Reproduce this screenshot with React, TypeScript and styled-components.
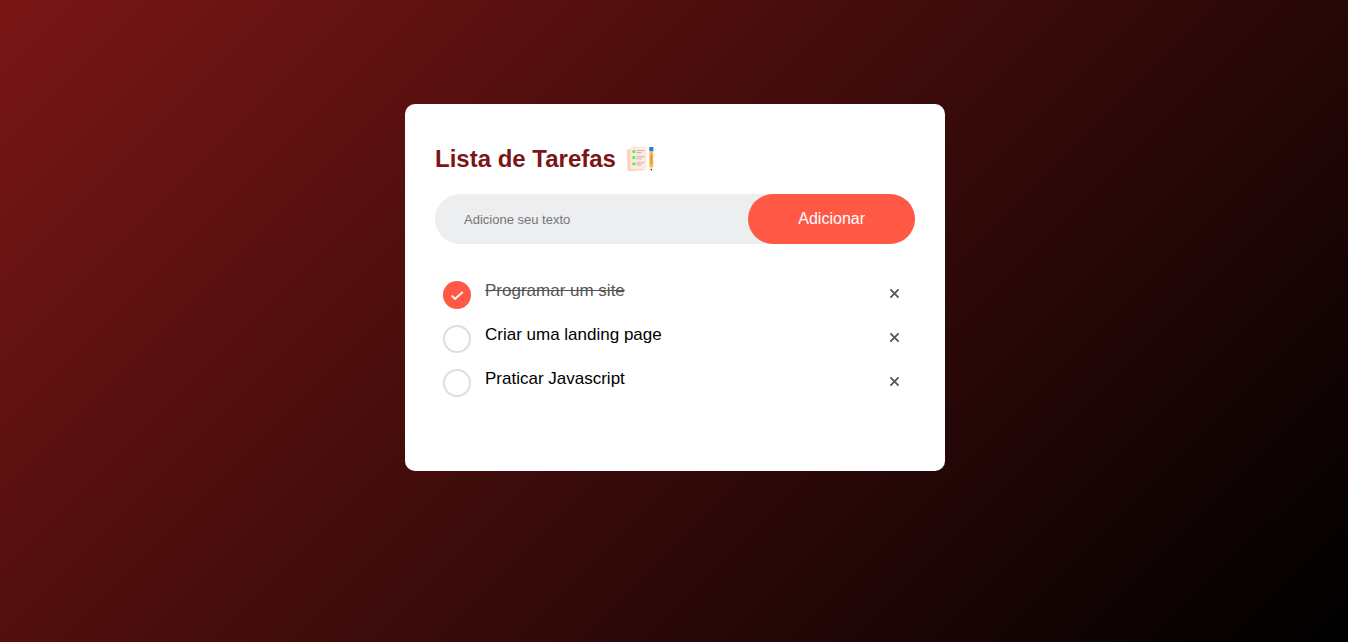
import React, { useState } from "react";
import styled, { createGlobalStyle } from "styled-components";

const GlobalStyle = createGlobalStyle`
  * {
    box-sizing: border-box;
    margin: 0;
    padding: 0;
  }
  body {
    font-family: "Liberation Sans", Arial, sans-serif;
  }
`;

const Page = styled.main`
  min-height: 100vh;
  padding: 104px 10px 10px 12px;
  background: linear-gradient(135deg, #7a1616, #000);
`;

const Card = styled.section`
  width: 100%;
  max-width: 540px;
  margin: 0 auto;
  padding: 40px 30px 74px;
  border-radius: 10px;
  background: #fff;
`;

const Header = styled.header`
  display: flex;
  align-items: center;
  gap: 9px;
  height: 30px;
  margin-bottom: 20px;
`;

const Title = styled.h1`
  color: #7a1616;
  font-size: 24px;
  line-height: 28px;
`;

const Form = styled.form`
  display: flex;
  height: 50px;
  margin-bottom: 37px;
  border-radius: 30px;
  background: #edeef0;
`;

const TextInput = styled.input`
  flex: 1;
  min-width: 0;
  padding: 0 10px 0 29px;
  border: none;
  outline: none;
  background: transparent;
  font-family: inherit;
  font-size: 13px;
  &::placeholder {
    color: #757575;
  }
`;

const AddButton = styled.button`
  padding: 0 50px;
  border: none;
  border-radius: 40px;
  background: #ff5945;
  color: #fff;
  font-family: inherit;
  font-size: 16px;
  cursor: pointer;
`;

const List = styled.ul`
  display: flex;
  flex-direction: column;
  gap: 16px;
  padding: 0 8px;
  list-style: none;
`;

const Row = styled.li`
  display: flex;
  align-items: flex-start;
  justify-content: space-between;
`;

const TaskLabel = styled.label<{ $done: boolean }>`
  display: flex;
  gap: 14px;
  color: ${({ $done }) => ($done ? "#555" : "#000")};
  text-decoration: ${({ $done }) => ($done ? "line-through" : "none")};
  font-size: 17px;
  line-height: 20px;
  cursor: pointer;
`;

const check = `url("data:image/svg+xml,%3Csvg xmlns='http://www.w3.org/2000/svg' viewBox='0 0 28 28'%3E%3Cpath d='M8.7 14.6l3.3 3.2 7.8-6.8' fill='none' stroke='%23fff1ef' stroke-width='2'/%3E%3C/svg%3E")`;

const Tick = styled.input`
  appearance: none;
  flex: none;
  width: 28px;
  height: 28px;
  border: 2px solid #dedede;
  border-radius: 50%;
  cursor: pointer;
  &:checked {
    border: none;
    background: #ff5945 ${check} center / 28px 28px no-repeat;
  }
`;

const RemoveButton = styled.button`
  display: grid;
  place-items: center;
  width: 25px;
  height: 25px;
  border: none;
  border-radius: 50%;
  background: transparent;
  color: #555;
  cursor: pointer;
`;

function ChecklistIcon() {
  return (
    <svg width="30" height="30" viewBox="0 0 30 30" aria-hidden="true">
      <path d="M1.8 5.5L14 4l5.5 22L4 27.2Q2.7 27.2 2.5 26z" fill="#ffd0c0" />
      <rect x="5.5" y="2.6" width="16" height="22.4" rx="1" fill="#ffe9de" />
      {[7.6, 13.7, 19.8].map((y) => (
        <g key={y}>
          <circle cx="8.8" cy={y} r="1.6" fill="#4df53f" />
          <path d={`M11.4 ${y - 1}h8`} stroke="#bfaab3" strokeWidth="0.9" />
          <path d={`M11.4 ${y + 1}h5`} stroke="#bfaab3" strokeWidth="0.9" />
        </g>
      ))}
      <path d="M24.3 7h4v15l-1 3h-2l-1-3z" fill="#ffb74d" />
      <rect x="24.3" y="3" width="4" height="4" rx="0.5" fill="#0a84f0" />
      <path d="M26.3 10.5v9" stroke="#b8823a" strokeWidth="0.9" />
      <path d="M24.5 23h3.6l-1.8 4z" fill="#ffdcd0" />
      <path d="M25.5 25h1.6l-.8 2z" fill="#222" />
    </svg>
  );
}

const initialTasks = [
  { id: 1, text: "Programar um site", done: true },
  { id: 2, text: "Criar uma landing page", done: false },
  { id: 3, text: "Praticar Javascript", done: false },
];

export default function App() {
  const [tasks, setTasks] = useState(initialTasks);
  const [text, setText] = useState("");

  const add = (event: React.FormEvent) => {
    event.preventDefault();
    if (!text.trim()) return;
    setTasks([...tasks, { id: Date.now(), text: text.trim(), done: false }]);
    setText("");
  };

  const toggle = (id: number) =>
    setTasks(tasks.map((t) => (t.id === id ? { ...t, done: !t.done } : t)));

  return (
    <Page>
      <GlobalStyle />
      <Card>
        <Header>
          <Title>Lista de Tarefas</Title>
          <ChecklistIcon />
        </Header>
        <Form onSubmit={add}>
          <TextInput
            type="text"
            aria-label="Adicione seu texto"
            placeholder="Adicione seu texto"
            value={text}
            onChange={(event) => setText(event.target.value)}
          />
          <AddButton type="submit">Adicionar</AddButton>
        </Form>
        <List>
          {tasks.map((task) => (
            <Row key={task.id}>
              <TaskLabel $done={task.done}>
                <Tick
                  type="checkbox"
                  checked={task.done}
                  onChange={() => toggle(task.id)}
                />
                <span>{task.text}</span>
              </TaskLabel>
              <RemoveButton
                type="button"
                aria-label={`Remover ${task.text}`}
                onClick={() => setTasks(tasks.filter((t) => t.id !== task.id))}
              >
                <svg width="11" height="11" viewBox="0 0 11 11" aria-hidden="true">
                  <path d="M1.4 1.4l8.2 8.2M9.6 1.4l-8.2 8.2" stroke="currentColor" strokeWidth="1.8" />
                </svg>
              </RemoveButton>
            </Row>
          ))}
        </List>
      </Card>
    </Page>
  );
}
